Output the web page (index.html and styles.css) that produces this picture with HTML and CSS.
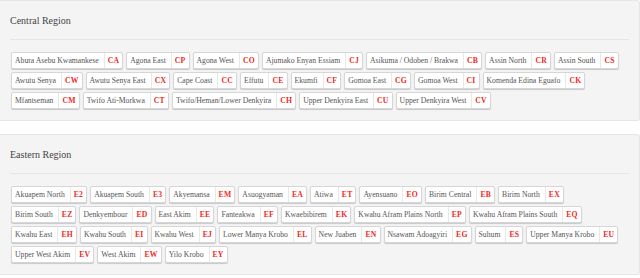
FILE: index.html
```html
<!DOCTYPE html>
<html>
<head>
<meta charset="utf-8">
<link rel="stylesheet" href="styles.css">
</head>
<body>
<section class="panel">
  <h3 class="panel-title">Central Region</h3>
  <hr class="rule">
  <div class="tags">
    <span class="tag"><span class="name">Abura Asebu Kwamankese</span><span class="code">CA</span></span>
    <span class="tag"><span class="name">Agona East</span><span class="code">CP</span></span>
    <span class="tag"><span class="name">Agona West</span><span class="code">CO</span></span>
    <span class="tag"><span class="name">Ajumako Enyan Essiam</span><span class="code">CJ</span></span>
    <span class="tag"><span class="name">Asikuma / Odoben / Brakwa</span><span class="code">CB</span></span>
    <span class="tag"><span class="name">Assin North</span><span class="code">CR</span></span>
    <span class="tag"><span class="name">Assin South</span><span class="code">CS</span></span>
    <span class="tag"><span class="name">Awutu Senya</span><span class="code">CW</span></span>
    <span class="tag"><span class="name">Awutu Senya East</span><span class="code">CX</span></span>
    <span class="tag"><span class="name">Cape Coast</span><span class="code">CC</span></span>
    <span class="tag"><span class="name">Effutu</span><span class="code">CE</span></span>
    <span class="tag"><span class="name">Ekumfi</span><span class="code">CF</span></span>
    <span class="tag"><span class="name">Gomoa East</span><span class="code">CG</span></span>
    <span class="tag"><span class="name">Gomoa West</span><span class="code">CI</span></span>
    <span class="tag"><span class="name">Komenda Edina Eguafo</span><span class="code">CK</span></span>
    <span class="tag"><span class="name">Mfantseman</span><span class="code">CM</span></span>
    <span class="tag"><span class="name">Twifo Ati-Morkwa</span><span class="code">CT</span></span>
    <span class="tag"><span class="name">Twifo/Heman/Lower Denkyira</span><span class="code">CH</span></span>
    <span class="tag"><span class="name">Upper Denkyira East</span><span class="code">CU</span></span>
    <span class="tag"><span class="name">Upper Denkyira West</span><span class="code">CV</span></span>
  </div>
</section>
<section class="panel">
  <h3 class="panel-title">Eastern Region</h3>
  <hr class="rule">
  <div class="tags">
    <span class="tag"><span class="name">Akuapem North</span><span class="code">E2</span></span>
    <span class="tag"><span class="name">Akuapem South</span><span class="code">E3</span></span>
    <span class="tag"><span class="name">Akyemansa</span><span class="code">EM</span></span>
    <span class="tag"><span class="name">Asuogyaman</span><span class="code">EA</span></span>
    <span class="tag"><span class="name">Atiwa</span><span class="code">ET</span></span>
    <span class="tag"><span class="name">Ayensuano</span><span class="code">EO</span></span>
    <span class="tag"><span class="name">Birim Central</span><span class="code">EB</span></span>
    <span class="tag"><span class="name">Birim North</span><span class="code">EX</span></span>
    <span class="tag"><span class="name">Birim South</span><span class="code">EZ</span></span>
    <span class="tag"><span class="name">Denkyembour</span><span class="code">ED</span></span>
    <span class="tag"><span class="name">East Akim</span><span class="code">EE</span></span>
    <span class="tag"><span class="name">Fanteakwa</span><span class="code">EF</span></span>
    <span class="tag"><span class="name">Kwaebibirem</span><span class="code">EK</span></span>
    <span class="tag"><span class="name">Kwahu Afram Plains North</span><span class="code">EP</span></span>
    <span class="tag"><span class="name">Kwahu Afram Plains South</span><span class="code">EQ</span></span>
    <span class="tag"><span class="name">Kwahu East</span><span class="code">EH</span></span>
    <span class="tag"><span class="name">Kwahu South</span><span class="code">EI</span></span>
    <span class="tag"><span class="name">Kwahu West</span><span class="code">EJ</span></span>
    <span class="tag"><span class="name">Lower Manya Krobo</span><span class="code">EL</span></span>
    <span class="tag"><span class="name">New Juaben</span><span class="code">EN</span></span>
    <span class="tag"><span class="name">Nsawam Adoagyiri</span><span class="code">EG</span></span>
    <span class="tag"><span class="name">Suhum</span><span class="code">ES</span></span>
    <span class="tag"><span class="name">Upper Manya Krobo</span><span class="code">EU</span></span>
    <span class="tag"><span class="name">Upper West Akim</span><span class="code">EV</span></span>
    <span class="tag"><span class="name">West Akim</span><span class="code">EW</span></span>
    <span class="tag"><span class="name">Yilo Krobo</span><span class="code">EY</span></span>
  </div>
</section>
</body>
</html>
```
FILE: styles.css
```css
html, body {
  margin: 0;
  padding: 0;
  background: #ffffff;
  font-family: "Liberation Serif", "DejaVu Serif", serif;
}

.panel {
  background: #f4f4f4;
  border: 1px solid #e6e6e6;
  border-left: none;
  border-radius: 0 3px 3px 0;
  padding: 14px 10px 11px 10px;
  margin: 0 0 13px 0;
}

.panel-title {
  margin: 0;
  font-size: 10px;
  line-height: 12px;
  font-weight: normal;
  color: #444;
}

.rule {
  border: none;
  border-top: 1px solid #e6e6e6;
  margin: 12px 0 12px 0;
  height: 0;
}

.tags {
  display: flex;
  flex-wrap: wrap;
  gap: 3px 3px;
  padding-left: 1px;
}

.tag {
  display: flex;
  align-items: stretch;
  background: #fff;
  border: 1px solid #d6d6d6;
  border-radius: 2px;
  box-shadow: 0 1px 1px rgba(0, 0, 0, 0.18);
  font-size: 7.7px;
  line-height: 11px;
}

.name {
  padding: 2px 5px 2px 3px;
  color: #555;
}

.code {
  padding: 2px 3px 2px 3px;
  border-left: 1px solid #e8e8e8;
  color: #f02a1e;
  font-weight: bold;
  letter-spacing: 0.2px;
}
```
